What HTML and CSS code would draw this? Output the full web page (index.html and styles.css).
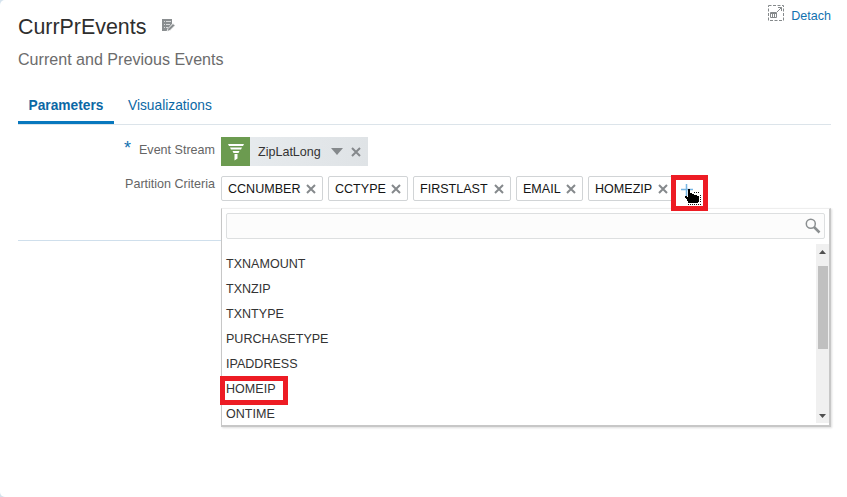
FILE: index.html
```html
<!DOCTYPE html>
<html lang="en">
<head>
<meta charset="utf-8">
<title>CurrPrEvents</title>
<link rel="stylesheet" href="styles.css">
</head>
<body>
<svg class="defs" width="0" height="0" aria-hidden="true">
  <symbol id="close" viewBox="0 0 10 10"><path d="M1 1l8 8M9 1L1 9" fill="none" stroke="#85898c" stroke-width="2"/></symbol>
</svg>
<main class="panel">
  <header class="header">
    <div class="heading">
      <div class="title-row">
        <h1>CurrPrEvents</h1>
        <svg class="edit" width="13" height="13" viewBox="0 0 13 13"><path d="M0 0h10v5L5 12H0z" fill="#8a8e90"/><path d="M2 2.500h1M4 2.500h5M2 5.500h1M4 5.500h4M2 8.500h1M4 8.500h2" stroke="#d8dadb"/><path d="M5 12.500l1-3 5-5 2 2-5 5z" fill="#888c8e" stroke="#fff" stroke-width=".8"/></svg>
      </div>
      <p class="subtitle">Current and Previous Events</p>
    </div>
    <a class="detach">
      <svg width="16" height="16" viewBox="0 0 16 16" fill="none" stroke="#85898b"><path d="M.5.5h15v15H.5z" stroke-dasharray="3 1.500"/><path d="M2.500 7.500h6v5h-6zM2 8.500h7M4.500 8v5M6.500 8v5M9 7l4.500-4.500M10 2.500h3.500V6"/></svg>
      <span>Detach</span>
    </a>
  </header>
  <nav class="tabs"><a class="tab active">Parameters</a><a class="tab">Visualizations</a></nav>
  <section class="form">
    <div class="row stream-row">
      <label><span class="required">*</span>Event Stream</label>
      <div class="stream">
        <span class="stream-icon"><svg width="18" height="18" viewBox="0 0 18 18" fill="#fff"><path d="M1 1h16l-1 2H2zM3 4.500h12l-1 2H4zM5.500 8h7l-1 2h-5zM7.500 11h3v4.500l-3 2z"/></svg></span>
        <span class="stream-name">ZipLatLong</span>
        <svg class="caret" width="12" height="7" viewBox="0 0 12 7"><path d="M0 0h12L6 7z" fill="#85898c"/></svg>
        <svg width="10" height="10"><use href="#close"/></svg>
      </div>
    </div>
    <div class="row criteria-row">
      <label>Partition Criteria</label>
      <div class="chips">
        <span class="chip c1">CCNUMBER<svg width="10" height="10"><use href="#close"/></svg></span>
        <span class="chip c2">CCTYPE<svg width="10" height="10"><use href="#close"/></svg></span>
        <span class="chip c3">FIRSTLAST<svg width="10" height="10"><use href="#close"/></svg></span>
        <span class="chip c4">EMAIL<svg width="10" height="10"><use href="#close"/></svg></span>
        <span class="chip c5">HOMEZIP<svg width="10" height="10"><use href="#close"/></svg></span>
      </div>
    </div>
  </section>
  <div class="add-highlight">
    <svg width="27" height="26" viewBox="0 0 27 26"><path d="M5 9.500h12M10.500 4v12" stroke="#76b5e3" stroke-width="1.500"/><path d="M12 9h2v4h2v1h2v1h3v1h2v6h-1v1H12v-2h-1v-2h-1v-1H9v-2h2v1h1z" fill="#000"/><path d="M18 12.500h6M24.500 15v7M12 24.500h13" fill="none" stroke="#111" stroke-dasharray="1 1"/></svg>
  </div>
  <div class="dropdown">
    <div class="search"><svg width="16" height="16" viewBox="0 0 16 16" fill="none" stroke="#8b8f91"><circle cx="5.800" cy="5.800" r="4.500" stroke-width="1.500"/><path d="M9 9l5.500 5.500" stroke-width="2.500"/></svg></div>
    <div class="results">
      <ul>
        <li>TXNAMOUNT</li><li>TXNZIP</li><li>TXNTYPE</li><li>PURCHASETYPE</li><li>IPADDRESS</li><li>HOMEIP</li><li>ONTIME</li>
      </ul>
      <div class="scrollbar">
        <svg width="7" height="4" viewBox="0 0 7 4"><path d="M0 4h7L3.500 0z" fill="#505050"/></svg>
        <div class="thumb"></div>
        <svg class="down" width="7" height="4" viewBox="0 0 7 4"><path d="M0 0h7L3.500 4z" fill="#505050"/></svg>
      </div>
    </div>
    <div class="item-highlight"></div>
  </div>
</main>
</body>
</html>
```
FILE: styles.css
```css
* { box-sizing: border-box; }
body { margin: 0; background: #d5e3ee; font: 12.55px/16px "Liberation Sans", sans-serif; color: #333; overflow: hidden; }
.defs { position: absolute; }
svg { display: block; flex: none; }
.panel { position: relative; height: 497px; padding: 0 16px 0 18px; background: #fff; border-radius: 5px 0 0 5px; }
.header { display: flex; justify-content: space-between; height: 87px; }
.title-row { display: flex; padding-top: 14px; }
h1 { margin: 0; font-size: 21.4px; font-weight: 400; line-height: 26px; color: #2e2e2e; }
.edit { margin: 5px 0 0 16px; }
.subtitle { margin: 9px 0 0; font-size: 16.08px; line-height: 20px; color: #6c6c6c; }
.detach { display: flex; gap: 7px; padding-top: 5px; height: 24px; color: #1272b0; }
.detach span { padding-top: 3px; }
.tabs { display: flex; height: 38px; border-bottom: 1px solid #dce4ea; font-size: 13.75px; }
.tab { height: 37px; padding: 11px 0 0 14px; color: #0b68a5; }
.tab.active { width: 96px; padding-left: 10.5px; font-weight: 700; border-bottom: 3px solid #0878be; }
.form { height: 116px; border-bottom: 1px solid #cfdfec; }
.row { display: flex; }
.row label { width: 203px; padding-right: 6px; text-align: right; color: #656565; }
.stream-row { padding-top: 12px; }
.stream-row label { padding-top: 5px; }
.required { margin-right: 8px; font-size: 18px; line-height: 12px; color: #1272b0; }
.stream { display: flex; align-items: center; width: 147px; height: 29px; background: linear-gradient(90deg, #e8ecef, #dfe3e6); color: #333; }
.stream-icon { display: grid; place-items: center; width: 29px; height: 29px; background: #6c9b50; }
.stream-name { width: 73px; margin-left: 8px; }
.caret { margin-right: 8px; }
.criteria-row { padding-top: 10px; }
.chips { display: flex; gap: 5px; }
.chip { display: flex; align-items: center; justify-content: space-between; height: 25px; padding: 0 6px 0 6px; border: 1px solid #d1d4d6; border-radius: 2px; color: #151515; }
.chip svg { margin-top: 1px; }
.c1 { width: 102px; }
.c2 { width: 80px; }
.c3 { width: 98px; }
.c4 { width: 67px; }
.c5 { width: 85px; padding-right: 4px; }
.add-highlight { position: absolute; z-index: 2; left: 671px; top: 175px; width: 37px; height: 36px; border: 5px solid #ed1c24; background: #fff; }
.dropdown { position: absolute; z-index: 1; left: 221px; top: 208px; width: 610px; height: 219px; padding: 4px 2px 2px 0; background: #fff; border: 1px solid #c7c7c7; border-top-color: #eee; border-right-width: 2px; border-bottom-width: 2px; box-shadow: 1px 1px 2px #ddd; }
.search { display: flex; justify-content: flex-end; width: 599px; height: 26px; margin-left: 4px; padding: 4px 3px 0 0; border: 1px solid #dddfe0; border-radius: 2px; background: #fcfcfc; }
.results { display: flex; justify-content: space-between; height: 180px; margin: 4px -2px 0 0; }
ul { margin: 0; padding: 10px 0 0 4px; list-style: none; }
li { height: 25px; line-height: 23px; }
.scrollbar { display: flex; flex-direction: column; align-items: center; width: 13px; height: 179px; margin-top: 1px; padding: 6px 0 5px; background: #f0f0f0; }
.thumb { width: 10px; height: 83px; margin-top: 12px; background: #c0c0c0; }
.down { margin-top: auto; }
.item-highlight { position: absolute; left: -2px; top: 167px; width: 68px; height: 29px; border: 5px solid #ed1c24; }
```
